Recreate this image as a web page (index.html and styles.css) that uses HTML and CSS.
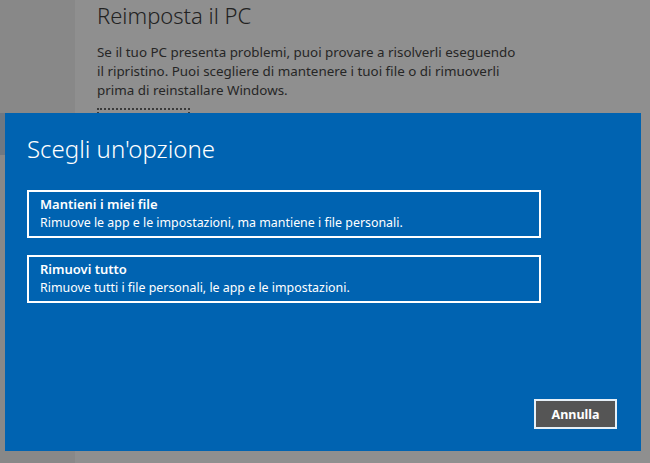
FILE: index.html
```html
<!DOCTYPE html>
<html lang="it">
<head>
<meta charset="utf-8">
<title>Reimposta il PC</title>
<link rel="stylesheet" href="styles.css">
</head>
<body>
<div class="page">
  <aside class="sidebar">
    <div class="nav-gap"></div>
    <div class="nav-selected"></div>
  </aside>
  <main class="content">
    <h1 class="heading">Reimposta il PC</h1>
    <p class="desc">Se il tuo PC presenta problemi, puoi provare a risolverli eseguendo il ripristino. Puoi scegliere di mantenere i tuoi file o di rimuoverli prima di reinstallare Windows.</p>
    <div class="start-btn"></div>
  </main>
</div>
<div class="dialog">
  <h2 class="dialog-title">Scegli un'opzione</h2>
  <div class="options">
    <div class="option">
      <div class="option-title">Mantieni i miei file</div>
      <div class="option-sub">Rimuove le app e le impostazioni, ma mantiene i file personali.</div>
    </div>
    <div class="option">
      <div class="option-title">Rimuovi tutto</div>
      <div class="option-sub">Rimuove tutti i file personali, le app e le impostazioni.</div>
    </div>
  </div>
  <div class="actions">
    <button class="cancel">Annulla</button>
  </div>
</div>
</body>
</html>
```
FILE: styles.css
```css
html, body {
  margin: 0;
  padding: 0;
  width: 650px;
  height: 463px;
  overflow: hidden;
  background: #8f8f8f;
  font-family: "Noto Sans", "Open Sans", sans-serif;
}
.page {
  display: flex;
  height: 463px;
}
.sidebar {
  width: 75px;
  background: #888888;
  display: flex;
  flex-direction: column;
}
.nav-gap { height: 113px; }
.nav-selected {
  height: 42px;
  background: #6f7882;
}
.content {
  flex: 1;
  background: #8f8f8f;
  padding: 0 0 0 22px;
  color: #262626;
}
.heading {
  margin: 0;
  padding-top: 1px;
  font-size: 22px;
  font-weight: 300;
  line-height: 28px;
  color: #222;
}
.desc {
  margin: 14px 0 0 0;
  width: 425px;
  font-size: 13.4px;
  line-height: 19px;
  color: #262626;
}
.start-btn {
  margin-top: 8px;
  width: 93px;
  height: 30px;
  border: 2px dotted #3a3a3a;
  box-sizing: border-box;
}
.dialog {
  position: absolute;
  left: 5px;
  top: 113px;
  width: 636px;
  height: 338px;
  background: #0063b1;
  color: #fff;
  box-sizing: border-box;
  padding: 0 24px 0 22px;
  display: flex;
  flex-direction: column;
}
.dialog-title {
  margin: 0;
  padding-top: 20px;
  font-size: 24px;
  font-weight: 300;
  line-height: 32px;
}
.options {
  margin-top: 25px;
  display: flex;
  flex-direction: column;
  gap: 17px;
}
.option {
  width: 514px;
  height: 48px;
  box-sizing: border-box;
  border: 2px solid #fff;
  padding: 4px 0 0 11px;
}
.option-title {
  font-size: 13px;
  font-weight: 600;
  line-height: 17px;
}
.option-sub {
  font-size: 12.4px;
  line-height: 19px;
}
.actions {
  margin-top: auto;
  margin-bottom: 22px;
  display: flex;
  justify-content: flex-end;
}
.cancel {
  width: 83px;
  height: 30px;
  margin-right: 0;
  background: #555555;
  color: #fff;
  border: 2px solid #e6f0f8;
  font-family: "Noto Sans", sans-serif;
  font-size: 12.5px;
  font-weight: 700;
  padding: 0;
}
```
